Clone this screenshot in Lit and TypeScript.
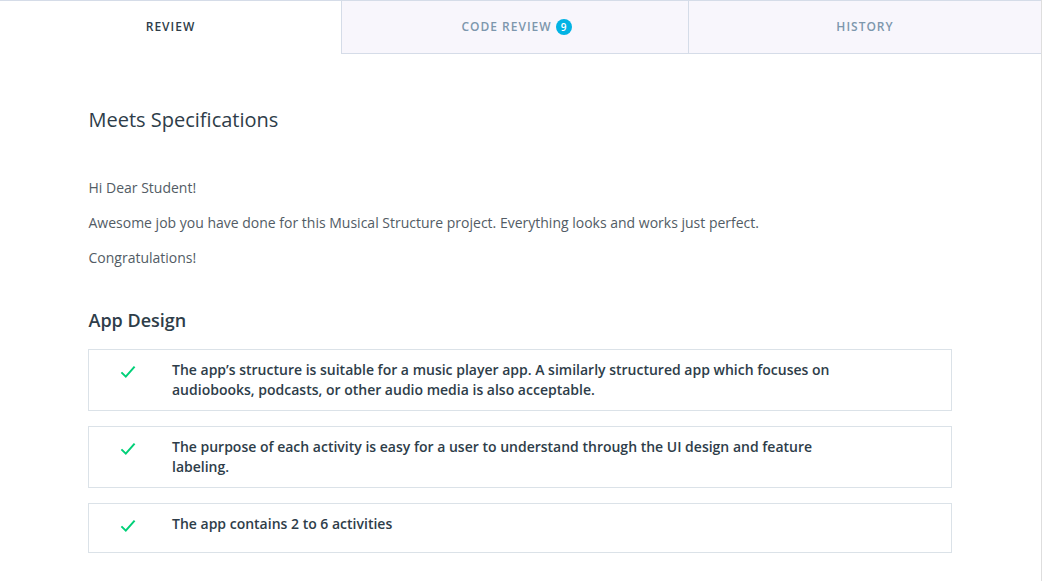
import { LitElement, html, css } from "lit";
import { customElement } from "lit/decorators.js";

const items = [
  "The app’s structure is suitable for a music player app. A similarly structured app which focuses on audiobooks, podcasts, or other audio media is also acceptable.",
  "The purpose of each activity is easy for a user to understand through the UI design and feature labeling.",
  "The app contains 2 to 6 activities",
];

@customElement("app-root")
export class AppRoot extends LitElement {
  static styles = css`
    :host {
      display: block;
      height: 581px;
      overflow: hidden;
      background: #fff;
      font-family: "Open Sans", sans-serif;
      color: #2e3d49;
      box-sizing: border-box;
      border-right: 1px solid #dedede;
    }
    * { box-sizing: border-box; }
    .tabs {
      display: grid;
      grid-template-columns: 341px 347px 1fr;
      height: 54px;
      border-top: 1px solid #d5dce8;
    }
    .tab {
      display: flex;
      align-items: center;
      justify-content: center;
      gap: 4px;
      background: #f8f6fc;
      border-bottom: 1px solid #d5dce8;
      border-left: 1px solid #d5dce8;
      font-size: 12px;
      font-weight: 600;
      letter-spacing: 1px;
      color: #7d97ad;
      padding-bottom: 1px;
    }
    .tab.active {
      background: #fff;
      border: none;
      color: #2e3d49;
      padding-bottom: 2px;
    }
    .tab.counted {
      padding-left: 3px;
    }
    .badge {
      display: flex;
      align-items: center;
      justify-content: center;
      width: 16px;
      height: 16px;
      border-radius: 50%;
      background: #02b3e4;
      color: #fff;
      font-size: 10px;
      letter-spacing: 0;
    }
    .content {
      padding: 52px 0 0 88px;
      width: 952px;
    }
    .lead {
      padding-left: 0.5px;
    }
    h1 {
      margin: 0;
      font-size: 20px;
      line-height: 28px;
      font-weight: 400;
      color: #2e3d49;
    }
    .intro {
      margin-top: 44px;
      display: flex;
      flex-direction: column;
      gap: 15px;
    }
    p {
      margin: 0;
      font-size: 14px;
      line-height: 20px;
      color: #525c65;
    }
    h2 {
      margin: 39px 0 0;
      font-size: 18px;
      line-height: 26px;
      font-weight: 600;
      color: #2e3d49;
    }
    .list {
      margin-top: 16px;
      display: flex;
      flex-direction: column;
      gap: 15px;
    }
    .item {
      display: flex;
      border: 1px solid #dbe2e8;
      padding: 10px 0;
      min-height: 50px;
    }
    .check {
      flex: 0 0 83px;
      display: flex;
      justify-content: center;
      padding: 5px 5px 0 0;
      height: 24px;
    }
    .check svg { display: block; }
    .text {
      width: 680px;
      font-size: 14px;
      line-height: 20px;
      font-weight: 600;
      color: #2e3d49;
    }
  `;

  render() {
    return html`
      <div class="tabs">
        <div class="tab active">REVIEW</div>
        <div class="tab counted">CODE REVIEW <span class="badge">9</span></div>
        <div class="tab">HISTORY</div>
      </div>
      <div class="content">
        <div class="lead">
          <h1>Meets Specifications</h1>
          <div class="intro">
            <p>Hi Dear Student!</p>
            <p>Awesome job you have done for this Musical Structure project. Everything looks and works just perfect.</p>
            <p>Congratulations!</p>
          </div>
          <h2>App Design</h2>
        </div>
        <div class="list">
          ${items.map(
            (t) => html`<div class="item">
              <div class="check">
                <svg width="16" height="14" viewBox="0 0 16 14" fill="none">
                  <path d="M1.4 7.4 L5.8 11.6 L14.6 1.6" stroke="#00d078" stroke-width="2" />
                </svg>
              </div>
              <div class="text">${t}</div>
            </div>`
          )}
        </div>
      </div>
    `;
  }
}
